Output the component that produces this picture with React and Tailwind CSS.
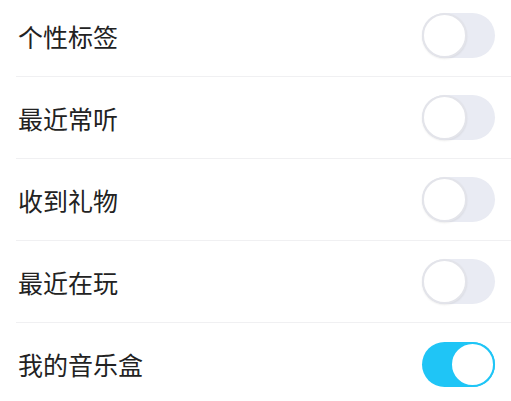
import { useState } from 'react';

const items = [
  { label: '个性标签', on: false },
  { label: '最近常听', on: false },
  { label: '收到礼物', on: false },
  { label: '最近在玩', on: false },
  { label: '我的音乐盒', on: true },
];

function Toggle({ on, onClick }) {
  return (
    <button
      onClick={onClick}
      className={`relative w-[73px] h-[45px] rounded-full flex items-center transition-colors ${
        on ? 'bg-[#1fc5f6] justify-end' : 'bg-[#e9ebf3] justify-start'
      }`}
    >
      <span
        className={`w-[45px] h-[45px] rounded-full bg-white border-2 ${
          on ? 'border-[#1fc5f6]' : 'border-[#e3e4ea] shadow-[0_1px_2px_rgba(0,0,0,0.08)]'
        }`}
      />
    </button>
  );
}

export default function App() {
  const [state, setState] = useState(items.map(i => i.on));

  return (
    <div className="w-[511px] h-[401px] overflow-hidden bg-white font-['Noto_Sans_CJK_SC',sans-serif]">
      <ul className="-mt-[5px]">
        {items.map((item, i) => (
          <li key={item.label} className="pl-4">
            <div
              className={`h-[82px] flex items-center justify-between pr-[16px] ${
                i < items.length - 1 ? 'border-b border-[#f0f0f2]' : ''
              }`}
            >
              <span className="pl-[2px] text-[25px] text-[#222] leading-none pt-[1px]">{item.label}</span>
              <Toggle
                on={state[i]}
                onClick={() => setState(s => s.map((v, j) => (j === i ? !v : v)))}
              />
            </div>
          </li>
        ))}
      </ul>
    </div>
  );
}
